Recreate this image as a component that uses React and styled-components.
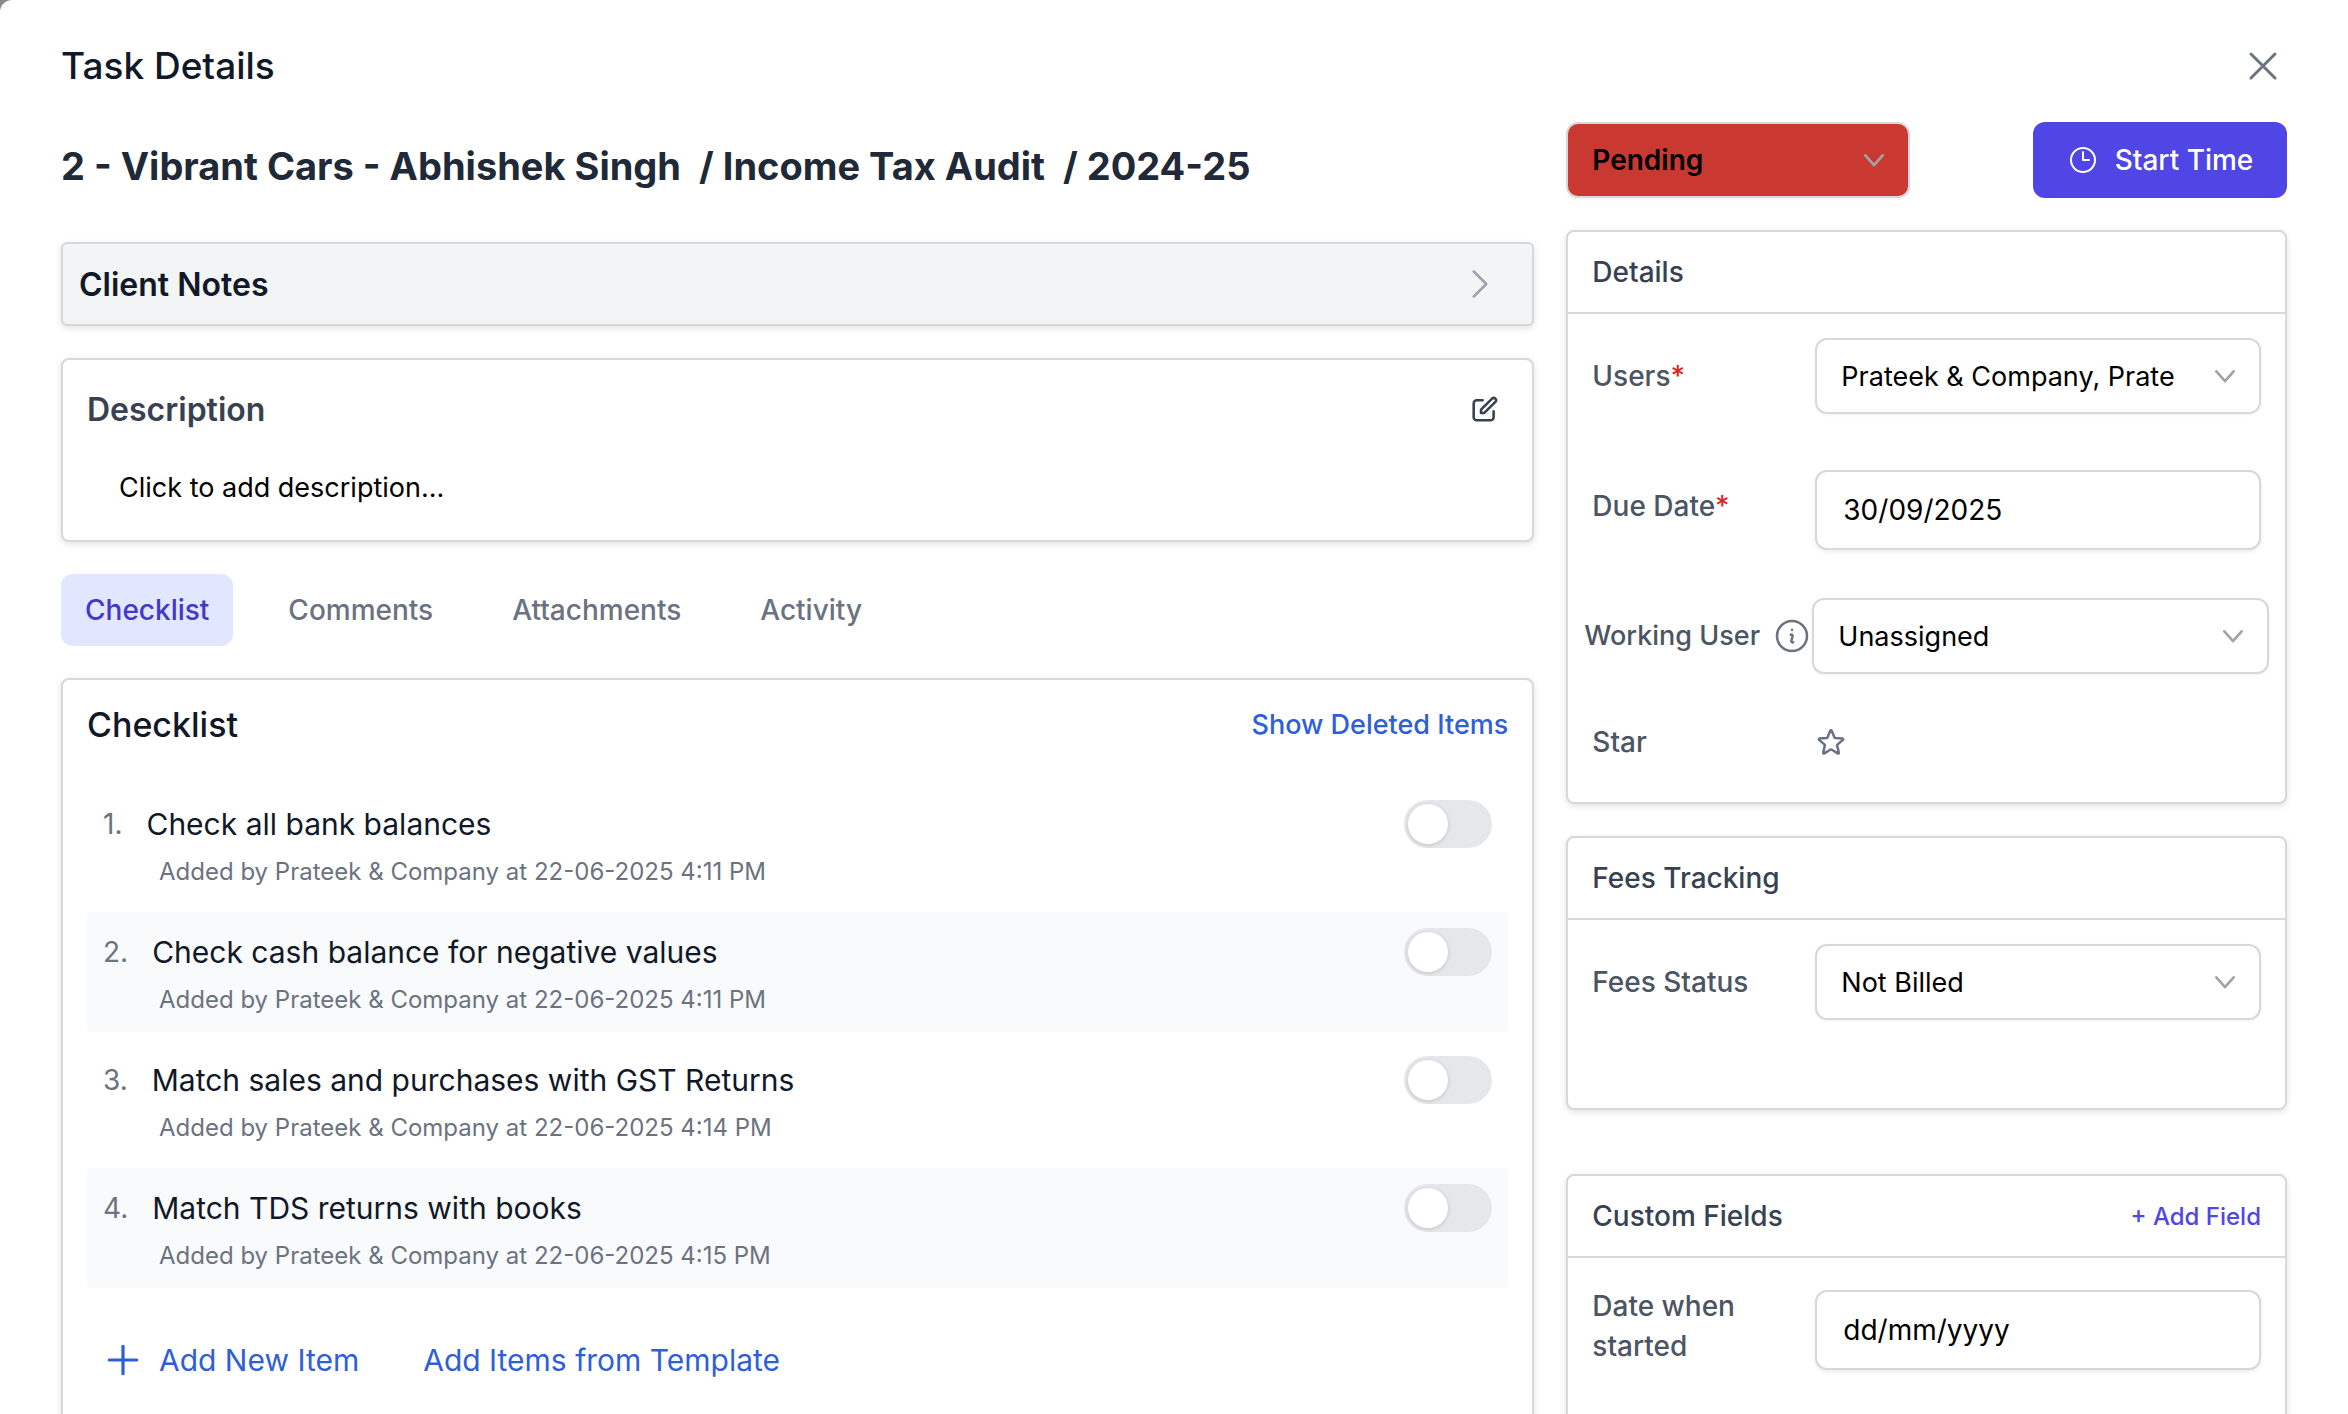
import React from 'react';
import styled, { createGlobalStyle } from 'styled-components';

const GlobalStyle = createGlobalStyle`
    *, *::before, *::after {
        box-sizing: border-box;
    }

    html, body {
        height: 100%;
        margin: 0;
        overflow: hidden;
        background-color: #8a8a8a;
    }

    body, button, input, select {
        font-family: Inter, "Liberation Sans", sans-serif;
    }

    h1, h2, h3, p, ol {
        margin: 0;
        padding: 0;
    }
`

const checklist = [
    { title: 'Check all bank balances', time: '22-06-2025 4:11 PM' },
    { title: 'Check cash balance for negative values', time: '22-06-2025 4:11 PM' },
    { title: 'Match sales and purchases with GST Returns', time: '22-06-2025 4:14 PM' },
    { title: 'Match TDS returns with books', time: '22-06-2025 4:15 PM' },
];

const tabs = ['Checklist', 'Comments', 'Attachments', 'Activity'];

const Icon = ({ size, stroke = 1.5, children }) => (
    <svg width={size} height={size} viewBox="0 0 24 24" fill="none" stroke="currentColor"
        strokeWidth={stroke} strokeLinecap="round" strokeLinejoin="round" aria-hidden="true">
        {children}
    </svg>
)

const CloseIcon = () => <Icon size={48}><path d="M6 18 18 6M6 6l12 12" /></Icon>
const ChevronRight = () => <Icon size={40}><path d="m8.25 4.5 7.5 7.5-7.5 7.5" /></Icon>
const ChevronDown = () => <Icon size={28} stroke={2.3}><path d="m4.6 8 7.4 8.4 7.4-8.4" /></Icon>
const PlusIcon = () => <Icon size={44} stroke={1.75}><path d="M12 4.5v15m7.5-7.5h-15" /></Icon>
const ClockIcon = () => <Icon size={32}><path d="M12 6v6h4.5m4.5 0a9 9 0 1 1-18 0 9 9 0 0 1 18 0Z" /></Icon>
const EditIcon = () => (
    <Icon size={28} stroke={2.2}>
        <path d="M10 4.5H5a2.7 2.7 0 0 0-2.7 2.7V19A2.7 2.7 0 0 0 5 21.7h11.7a2.7 2.7 0 0 0 2.7-2.7v-5" />
        <path d="M8.6 15.4v-2.8l9.7-9.7a2 2 0 0 1 2.8 2.8l-9.7 9.7z" />
    </Icon>
)
const InfoIcon = () => (
    <Icon size={40}>
        <path d="m11.25 11.25.041-.02a.75.75 0 0 1 1.063.852l-.708 2.836a.75.75 0 0 0 1.063.853l.041-.021M21 12a9 9 0 1 1-18 0 9 9 0 0 1 18 0Zm-9-3.75h.008v.008H12V8.25Z" />
    </Icon>
)
const StarIcon = () => (
    <Icon size={32} stroke={1.9}>
        <path d="M11.48 3.499a.562.562 0 0 1 1.04 0l2.125 5.111a.563.563 0 0 0 .475.345l5.518.442c.499.04.701.663.321.988l-4.204 3.602a.563.563 0 0 0-.182.557l1.285 5.385a.562.562 0 0 1-.84.61l-4.725-2.885a.562.562 0 0 0-.586 0L6.982 20.54a.562.562 0 0 1-.84-.61l1.285-5.386a.562.562 0 0 0-.182-.557l-4.204-3.602a.562.562 0 0 1 .321-.988l5.518-.442a.563.563 0 0 0 .475-.345L11.48 3.5Z" />
    </Icon>
)

const SelectBox = ({ id, label, value, status }) => (
    <SelectWrapper>
        <Select id={id} aria-label={label} defaultValue={value} $status={status}>
            <option>{value}</option>
        </Select>
        <SelectArrow><ChevronDown /></SelectArrow>
    </SelectWrapper>
)

const App = () => {
    return (
        <>
            <GlobalStyle />
            <Modal>
                <Header>
                    <ModalTitle>Task Details</ModalTitle>
                    <IconButton aria-label="Close"><CloseIcon /></IconButton>
                </Header>
                <Columns>
                    <Main>
                        <TaskTitle>
                            <span>2 - Vibrant Cars - Abhishek Singh</span>
                            <span>/ Income Tax Audit</span>
                            <span>/ 2024-25</span>
                        </TaskTitle>
                        <ClientNotes>
                            <span>Client Notes</span>
                            <ChevronRight />
                        </ClientNotes>
                        <Description>
                            <DescriptionHeader>
                                <DescriptionTitle>Description</DescriptionTitle>
                                <EditButton aria-label="Edit description"><EditIcon /></EditButton>
                            </DescriptionHeader>
                            <DescriptionText>Click to add description...</DescriptionText>
                        </Description>
                        <Tabs>
                            {tabs.map((tab, i) => (
                                <Tab key={tab} $active={i === 0}>{tab}</Tab>
                            ))}
                        </Tabs>
                        <ChecklistCard>
                            <ChecklistHeader>
                                <ChecklistTitle>Checklist</ChecklistTitle>
                                <ShowDeleted href="#deleted">Show Deleted Items</ShowDeleted>
                            </ChecklistHeader>
                            <List>
                                {checklist.map((item, i) => (
                                    <Item key={item.title}>
                                        <div>
                                            <ItemLabel htmlFor={`item-${i}`}>
                                                <ItemNumber>{i + 1}.</ItemNumber>
                                                {item.title}
                                            </ItemLabel>
                                            <ItemMeta>Added by Prateek &amp; Company at {item.time}</ItemMeta>
                                        </div>
                                        <Toggle type="checkbox" id={`item-${i}`} />
                                    </Item>
                                ))}
                            </List>
                            <Actions>
                                <ActionButton><PlusIcon />Add New Item</ActionButton>
                                <ActionButton>Add Items from Template</ActionButton>
                            </Actions>
                        </ChecklistCard>
                    </Main>
                    <Side>
                        <StatusRow>
                            <StatusField>
                                <SelectBox label="Status" value="Pending" status />
                            </StatusField>
                            <StartButton><ClockIcon />Start Time</StartButton>
                        </StatusRow>
                        <Panel>
                            <PanelHeader><PanelTitle>Details</PanelTitle></PanelHeader>
                            <DetailFields>
                                <Field>
                                    <Label htmlFor="users">Users<Required>*</Required></Label>
                                    <SelectBox id="users" value="Prateek &amp; Company, Prate" />
                                </Field>
                                <DueField>
                                    <Label htmlFor="due">Due Date<Required>*</Required></Label>
                                    <DateInput id="due" defaultValue="30/09/2025" />
                                </DueField>
                                <WorkingField>
                                    <WorkingLabel htmlFor="worker">Working User <InfoIcon /></WorkingLabel>
                                    <SelectBox id="worker" value="Unassigned" />
                                </WorkingField>
                                <StarField>
                                    <Label htmlFor="star">Star</Label>
                                    <IconButton id="star"><StarIcon /></IconButton>
                                </StarField>
                            </DetailFields>
                        </Panel>
                        <Panel>
                            <PanelHeader><PanelTitle>Fees Tracking</PanelTitle></PanelHeader>
                            <FeesFields>
                                <Field>
                                    <Label htmlFor="fees">Fees Status</Label>
                                    <SelectBox id="fees" value="Not Billed" />
                                </Field>
                            </FeesFields>
                        </Panel>
                        <CustomPanel>
                            <PanelHeader>
                                <PanelTitle>Custom Fields</PanelTitle>
                                <AddField>+ Add Field</AddField>
                            </PanelHeader>
                            <CustomFields>
                                <DateField>
                                    <Label htmlFor="started">Date when started</Label>
                                    <DateInput id="started" defaultValue="dd/mm/yyyy" />
                                </DateField>
                            </CustomFields>
                        </CustomPanel>
                    </Side>
                </Columns>
            </Modal>
        </>
    );
}

const Modal = styled.div`
    min-height: 100vh;
    padding: 40px 61px 0;
    border-top-left-radius: 12px;
    background-color: #fff;
    color: #111827;
`

const Header = styled.header`
    display: flex;
    justify-content: space-between;
    align-items: center;
    height: 52px;
`

const ModalTitle = styled.h1`
    font-size: 37px;
    font-weight: 500;
    line-height: 52px;
`

const IconButton = styled.button`
    display: flex;
    justify-content: center;
    align-items: center;
    width: fit-content;
    padding: 0;
    border: none;
    background: none;
    color: #6b7280;
    cursor: pointer;
`

const Columns = styled.div`
    display: grid;
    grid-template-columns: repeat(3, minmax(0, 1fr));
    column-gap: 32px;
    margin-top: 30px;
`

const Main = styled.main`
    display: flex;
    flex-direction: column;
    grid-column: span 2;
    gap: 32px;
`

const Side = styled.aside`
    display: flex;
    flex-direction: column;
    gap: 32px;
`

const TaskTitle = styled.h2`
    display: flex;
    gap: 18px;
    height: 88px;
    font-size: 38px;
    font-weight: 700;
    line-height: 88px;
    color: #1f2937;
`

const Card = styled.section`
    border: 2px solid #d6d8da;
    border-radius: 8px;
    background-color: #fff;
    box-shadow: 0 2px 6px rgba(0, 0, 0, 0.12);
`

const ClientNotes = styled.button`
    display: flex;
    justify-content: space-between;
    align-items: center;
    width: 100%;
    height: 84px;
    padding: 0 32px 0 16px;
    border: 2px solid #d6d8da;
    border-radius: 6px;
    background-color: #f3f4f6;
    box-shadow: 0 2px 6px rgba(0, 0, 0, 0.12);
    font-size: 32px;
    font-weight: 600;
    color: #111827;

    svg {
        color: #9ca3af;
    }
`

const Description = styled(Card)`
    height: 184px;
    padding: 24px;
`

const DescriptionHeader = styled.div`
    display: flex;
    justify-content: space-between;
    align-items: center;
    height: 50px;
`

const DescriptionTitle = styled.h3`
    font-size: 32px;
    font-weight: 600;
    color: #374151;
`

const EditButton = styled(IconButton)`
    padding: 0 9px;
    color: #374151;
`

const DescriptionText = styled.p`
    padding: 34px 32px 0;
    font-size: 27px;
    line-height: 40px;
    color: #000;
`

const Tabs = styled.nav`
    display: flex;
    gap: 31px;
`

const Tab = styled.button`
    height: 72px;
    padding: 0 24px;
    border: none;
    border-radius: 12px;
    background-color: ${props => props.$active ? '#e0e7ff' : 'transparent'};
    font-size: 28px;
    font-weight: 500;
    color: ${props => props.$active ? '#4338ca' : '#6b7280'};
`

const ChecklistCard = styled(Card)`
    padding: 24px 24px 40px;
`

const ChecklistHeader = styled.div`
    display: flex;
    justify-content: space-between;
    align-items: center;
    height: 40px;
`

const ChecklistTitle = styled.h3`
    font-size: 34px;
    font-weight: 500;
`

const ShowDeleted = styled.a`
    font-size: 27px;
    font-weight: 500;
    text-decoration: none;
    color: #2f5fd8;
`

const List = styled.ol`
    display: flex;
    flex-direction: column;
    gap: 8px;
    margin-top: 40px;
    list-style: none;
`

const Item = styled.li`
    display: flex;
    justify-content: space-between;
    align-items: flex-start;
    padding: 16px;
    border-radius: 4px;

    &:nth-child(even) {
        background-color: #f9fafb;
    }
`

const ItemLabel = styled.label`
    display: flex;
    align-items: center;
    gap: 24px;
    font-size: 30px;
    line-height: 48px;
`

const ItemNumber = styled.span`
    font-size: 28px;
    color: #6b7280;
`

const ItemMeta = styled.p`
    margin-top: 8px;
    padding-left: 56px;
    font-size: 24px;
    line-height: 32px;
    color: #6b7280;
`

const Toggle = styled.input`
    appearance: none;
    display: flex;
    width: 88px;
    height: 48px;
    margin: 0;
    padding: 4px;
    border-radius: 24px;
    background-color: #e5e7eb;

    &::before {
        content: '';
        width: 40px;
        height: 40px;
        border-radius: 50%;
        background-color: #fff;
        box-shadow: 0 1px 4px rgba(0, 0, 0, 0.16);
    }
`

const Actions = styled.div`
    display: flex;
    gap: 64px;
    margin-top: 48px;
    padding: 0 14px;
`

const ActionButton = styled.button`
    display: flex;
    align-items: center;
    gap: 14px;
    height: 48px;
    padding: 0;
    border: none;
    background: none;
    font-size: 30px;
    font-weight: 400;
    color: #2f5fd8;
`

const StatusRow = styled.div`
    display: flex;
    justify-content: space-between;
    height: 76px;
`

const StatusField = styled.div`
    width: 344px;
`

const StartButton = styled.button`
    display: flex;
    justify-content: center;
    align-items: center;
    gap: 16px;
    width: 254px;
    border: none;
    border-radius: 12px;
    background-color: #4f46e5;
    font-size: 28px;
    font-weight: 500;
    color: #fff;
`

const SelectWrapper = styled.div`
    display: grid;
    flex: 1;
    align-items: center;
    min-width: 0;

    > * {
        grid-area: 1 / 1;
    }
`

const Select = styled.select`
    appearance: none;
    width: 100%;
    height: 76px;
    padding: 0 72px 0 24px;
    border: 2px solid #d6d8da;
    border-radius: 12px;
    background-color: ${props => props.$status ? '#c93831' : '#fff'};
    box-shadow: 0 1px 3px rgba(0, 0, 0, 0.06);
    font-size: ${props => props.$status ? '28px' : '27px'};
    font-weight: ${props => props.$status ? 600 : 400};
    color: #000;
`

const SelectArrow = styled.span`
    display: flex;
    justify-self: end;
    padding-right: 22px;
    color: #a3a3a3;
    pointer-events: none;
`

const Panel = styled(Card)``

const CustomPanel = styled(Panel)`
    margin-top: 32px;
`

const PanelHeader = styled.div`
    display: flex;
    justify-content: space-between;
    align-items: center;
    height: 82px;
    padding: 0 24px;
    border-bottom: 2px solid #d6d8da;
`

const PanelTitle = styled.h3`
    font-size: 28px;
    font-weight: 500;
    color: #374151;
`

const DetailFields = styled.div`
    display: flex;
    flex-direction: column;
    padding: 24px 24px 40px;
`

const FeesFields = styled.div`
    padding: 24px 24px 88px;
`

const CustomFields = styled.div`
    padding: 28px 24px 88px;
`

const Label = styled.label`
    display: flex;
    align-items: center;
    flex: none;
    width: 223px;
    padding-right: 32px;
    font-size: 28px;
    font-weight: 500;
    line-height: 40px;
    color: #4b5563;
`

const WorkingLabel = styled(Label)`
    justify-content: space-between;
    width: 228px;
    padding-right: 0;
    font-size: 27px;
    white-space: nowrap;

    svg {
        color: #6b7280;
    }
`

const Field = styled.div`
    display: flex;
    align-items: center;
`

const DateField = styled(Field)`
    ${Label} {
        padding-bottom: 8px;
    }
`

const DueField = styled(DateField)`
    margin-top: 56px;
`

const WorkingField = styled(Field)`
    margin: 48px -8px 0;
`

const StarField = styled(Field)`
    height: 40px;
    margin-top: 48px;
`

const Required = styled.span`
    color: #dc2626;
`

const DateInput = styled.input`
    flex: 1;
    min-width: 0;
    height: 80px;
    padding: 0 26px;
    border: 2px solid #d6d8da;
    border-radius: 12px;
    box-shadow: 0 2px 4px rgba(0, 0, 0, 0.08);
    font-size: 28px;
    color: #000;
`

const AddField = styled.button`
    padding: 0;
    border: none;
    background: none;
    font-size: 24px;
    font-weight: 500;
    color: #4f46e5;
`

export default App
